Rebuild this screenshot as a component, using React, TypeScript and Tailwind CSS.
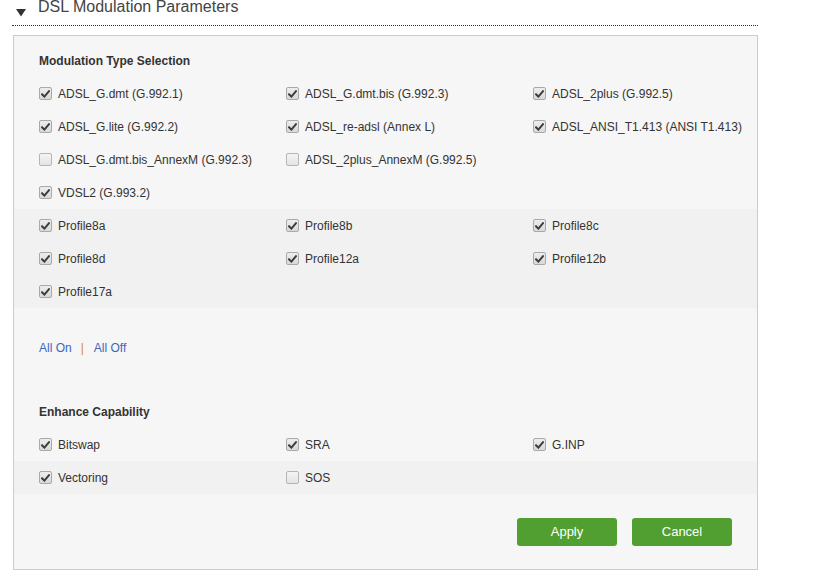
import React from "react";

function Check({ checked }: { checked: boolean }) {
  return (
    <span
      className={
        "relative inline-flex h-[13px] w-[13px] shrink-0 items-center justify-center rounded-[2px] border " +
        (checked
          ? "border-[#a9a9a9] bg-gradient-to-b from-[#ededed] to-[#d9d9d9]"
          : "border-[#b5b5b5] bg-gradient-to-b from-[#f4f4f4] to-[#e4e4e4]")
      }
    >
      {checked && (
        <svg width="9" height="8" viewBox="0 0 9 8" className="block">
          <path d="M1 4.3 L3.4 6.6 L8 1.2" fill="none" stroke="#3c3c3c" strokeWidth="2" strokeLinecap="square" strokeLinejoin="miter" />
        </svg>
      )}
    </span>
  );
}

function Item({ label, checked }: { label: string; checked: boolean }) {
  return (
    <label className="flex h-[33px] items-center gap-[6px] text-[12px] text-[#333]">
      <Check checked={checked} />
      <span>{label}</span>
    </label>
  );
}

function Grid({ items }: { items: [string, boolean][] }) {
  return (
    <div className="grid grid-cols-[247px_247px_1fr] pl-[25px]">
      {items.map(([l, c]) => (
        <Item key={l} label={l} checked={c} />
      ))}
    </div>
  );
}

export default function App() {
  return (
    <div className="min-h-[575px] w-[819px] bg-white font-['Liberation_Sans',Arial,sans-serif]">
      <div className="ml-[12px] w-[746px]">
        <div className="flex h-[26px] items-start border-b border-dotted border-[#333]">
          <svg width="10" height="8" viewBox="0 0 10 8" className="ml-[4px] mt-[9px]">
            <path d="M0 0 L10 0 L5 7.5 Z" fill="#333" />
          </svg>
          <span className="ml-[12px] mt-[-3px] text-[16px] leading-[20px] text-[#444]">DSL Modulation Parameters</span>
        </div>
      </div>
      <div className="ml-[13px] mt-[9px] w-[745px] border border-[#cccccc] bg-[#f6f6f6] pb-[23px] pt-[8px]">
        <div className="flex h-[33px] items-center pl-[25px] text-[12px] font-bold text-[#333]">Modulation Type Selection</div>
        <Grid
          items={[
            ["ADSL_G.dmt (G.992.1)", true],
            ["ADSL_G.dmt.bis (G.992.3)", true],
            ["ADSL_2plus (G.992.5)", true],
            ["ADSL_G.lite (G.992.2)", true],
            ["ADSL_re-adsl (Annex L)", true],
            ["ADSL_ANSI_T1.413 (ANSI T1.413)", true],
            ["ADSL_G.dmt.bis_AnnexM (G.992.3)", false],
            ["ADSL_2plus_AnnexM (G.992.5)", false],
          ]}
        />
        <Grid items={[["VDSL2 (G.993.2)", true]]} />
        <div className="bg-[#f1f1f1]">
          <Grid
            items={[
              ["Profile8a", true],
              ["Profile8b", true],
              ["Profile8c", true],
              ["Profile8d", true],
              ["Profile12a", true],
              ["Profile12b", true],
              ["Profile17a", true],
            ]}
          />
        </div>
        <div className="mt-[23px] flex h-[33px] items-center pl-[25px] text-[12px]">
          <a className="cursor-pointer text-[#3d66bd]">All On</a>
          <span className="ml-[9px] mr-[10px] text-[#d88a1e]">|</span>
          <a className="cursor-pointer text-[#3d66bd]">All Off</a>
        </div>
        <div className="mt-[31px] flex h-[33px] items-center pl-[25px] text-[12px] font-bold text-[#333]">Enhance Capability</div>
        <Grid
          items={[
            ["Bitswap", true],
            ["SRA", true],
            ["G.INP", true],
          ]}
        />
        <div className="bg-[#f1f1f1]">
          <Grid
            items={[
              ["Vectoring", true],
              ["SOS", false],
            ]}
          />
        </div>
        <div className="mt-[24px] flex justify-end gap-[15px] pr-[25px]">
          <button className="h-[28px] w-[100px] rounded-[3px] bg-[#519f31] text-[13px] text-white">Apply</button>
          <button className="h-[28px] w-[100px] rounded-[3px] bg-[#519f31] text-[13px] text-white">Cancel</button>
        </div>
      </div>
    </div>
  );
}
